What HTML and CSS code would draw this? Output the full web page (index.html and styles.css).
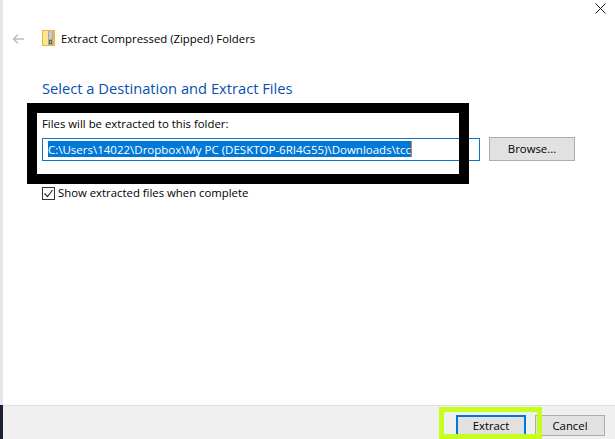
FILE: index.html
```html
<!DOCTYPE html>
<html lang="en">
<head>
<meta charset="utf-8">
<title>Extract Compressed (Zipped) Folders</title>
<link rel="stylesheet" href="styles.css">
</head>
<body>
<div class="window">
  <div class="edge"></div>
  <div class="dialog">
    <main class="main">
      <svg class="close" width="11" height="11" viewBox="0 0 11 11"><path d="M.5.5l10 10M10.500.5l-10 10" stroke="#1a1a1a" fill="none"/></svg>
      <header class="title-row">
        <svg class="back" width="12" height="12" viewBox="0 0 12 12"><path d="M12 6H1.500M6 1.500L1.500 6 6 10.500" stroke="#bdbdbd" stroke-width="1.500" fill="none"/></svg>
        <svg class="zip" width="13" height="16" viewBox="0 0 13 16"><rect x=".5" y=".5" width="12" height="15" fill="#fde68f" stroke="#e3b64a"/><rect x="11" y="1" width="1" height="14" fill="#f0c050"/><rect x="6" y="1" width="5" height="14" fill="#a9a9a2"/><path d="M7 2h3M7 4h3M7 6h3M7 8h3" stroke="#ecece6"/><rect x="7" y="10" width="3" height="4" fill="#6b6455"/><rect x="8" y="11" width="1" height="2" fill="#e8c860"/></svg>
        <span class="title">Extract Compressed (Zipped) Folders</span>
      </header>
      <h1 class="heading">Select a Destination and Extract Files</h1>
      <label class="field-label">Files will be extracted to this folder:</label>
      <div class="path-row">
        <div class="path-input"><span class="selected">C:\Users\14022\Dropbox\My PC (DESKTOP-6RI4G55)\Downloads\tcc</span></div>
        <div class="btn browse">Browse...</div>
      </div>
      <div class="check-row">
        <svg class="check" width="13" height="13" viewBox="0 0 13 13"><rect x=".5" y=".5" width="12" height="12" fill="#fff" stroke="#333"/><path d="M2.500 6.500l3 3 5-6.500" stroke="#333" stroke-width="1.200" fill="none"/></svg>
        <span>Show extracted files when complete</span>
      </div>
    </main>
    <footer class="footer">
      <div class="btn extract">Extract</div>
      <div class="btn cancel">Cancel</div>
    </footer>
  </div>
  <div class="mark-black"></div>
  <div class="mark-green"></div>
</div>
</body>
</html>
```
FILE: styles.css
```css
* { box-sizing: border-box; }
html, body { margin: 0; padding: 0; }
body { width: 615px; height: 439px; overflow: hidden; background: #fff; font-family: "Open Sans", "Noto Sans", sans-serif; font-size: 11.35px; color: #000; }
.window { position: relative; display: flex; width: 615px; height: 439px; }
.edge { width: 3px; background: linear-gradient(to bottom, #e6e6e6 0, #e6e6e6 405px, #1b2233 405px); }
.dialog { flex: 1; display: flex; flex-direction: column; min-width: 0; }
.main { position: relative; flex: 1; padding: 29px 0 0 39px; }
.close { position: absolute; top: 3px; right: 9px; }
.title-row { display: flex; align-items: center; height: 19px; margin-left: -30px; }
.back { margin-right: 18px; }
.zip { margin-right: 6px; margin-top: -1px; }
.title { line-height: 19px; }
.heading { margin: 30px 0 0; font-size: 14.7px; line-height: 20px; font-weight: 400; color: #0a4fb0; }
.field-label { display: block; margin-top: 18px; line-height: 16px; }
.path-row { display: flex; align-items: flex-start; gap: 9px; margin-top: 5px; }
.path-input { width: 438px; height: 23px; margin-top: 1px; padding: 2px 4px 2px 5px; border: 1px solid #0f74c8; font-size: 11.5px; line-height: 17px; }
.selected { display: inline-block; height: 16px; background: #0078d7; color: #fff; border-right: 1px solid #e08030; }
.btn { display: flex; align-items: center; justify-content: center; border: 1px solid #adadad; background: #e1e1e1; }
.browse { width: 86px; height: 24px; padding-bottom: 1px; }
.check-row { display: flex; align-items: center; gap: 3px; margin-top: 24px; line-height: 16px; }
.footer { display: flex; justify-content: flex-end; align-items: flex-start; gap: 9px; height: 34px; padding: 9px 10px 0 0; background: #f0f0f0; border-top: 1px solid #dfdfdf; }
.extract { width: 70px; height: 21px; border: 2px solid #0078d7; }
.cancel { width: 70px; height: 21px; }
.mark-black { position: absolute; left: 27px; top: 103px; width: 442px; height: 81px; border: 10px solid #000; }
.mark-green { position: absolute; left: 439px; top: 407px; width: 103px; height: 32px; border: 5px solid #c6ff1e; }
```
